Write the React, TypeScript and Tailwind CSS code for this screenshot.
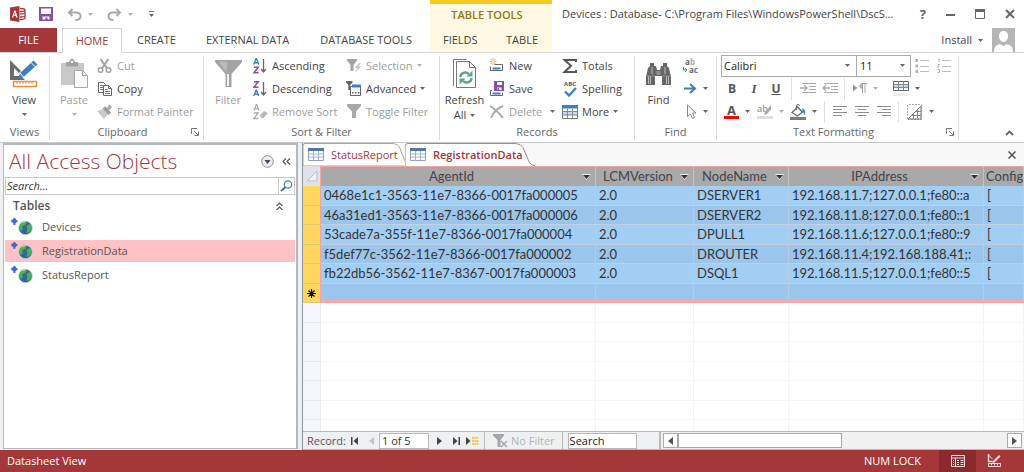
import type { ReactNode } from 'react';

const GREY = '#666';
const DIM = '#b0b0b0';

function Svg({ w, h, children, className = '' }: { w: number; h: number; children: ReactNode; className?: string }) {
  return (
    <svg width={w} height={h} viewBox={`0 0 ${w} ${h}`} fill="none" aria-hidden="true" className={'shrink-0 ' + className}>
      {children}
    </svg>
  );
}

function Caret({ dim = false, className = '' }: { dim?: boolean; className?: string }) {
  return (
    <Svg w={5} h={3} className={className}>
      <path d="M0 0h5L2.5 3z" fill={dim ? DIM : GREY} />
    </Svg>
  );
}

/* ---------- Title bar icons ---------- */

function AccessLogo() {
  return (
    <Svg w={16} h={16}>
      <path d="M0 1.5 9.5 0v16L0 14.5z" fill="#a4373a" />
      <path d="m2 11.5 2.3-7h1.2l2.2 7H6.3l-.5-1.7H3.7l-.5 1.7zM4 8.6h1.500L4.800 6z" fill="#fff" />
      <path d="M10 2.500c3 0 5 .3 5 1.500s-2 1.500-5 1.500M15 4v8c0 1-2 1.500-5 1.500M15 6.500c0 1-2 1.500-5 1.500M15 9.500c0 1-2 1.500-5 1.500" stroke="#a4373a" strokeWidth="1.300" />
    </Svg>
  );
}

function SaveIcon({ size = 14 }: { size?: number }) {
  return (
    <svg width={size} height={size} viewBox="0 0 14 14" aria-hidden="true" className="shrink-0">
      <path d="M0 0h14v14H0z" fill="#8650a8" />
      <path d="M2 1.500h10v5.500H2zM3.500 9.500h7v3h-2v-2h-2v2h-3z" fill="#fff" />
    </svg>
  );
}

function UndoIcon({ flip = false }: { flip?: boolean }) {
  return (
    <Svg w={15} h={13} className={flip ? '-scale-x-100' : ''}>
      <path d="M5.500 1 2 4.500 5.500 8M2 4.500h7c3.200 0 4.500 1.800 4.500 3.700S12 12 8.500 12" stroke="#a9a9a9" strokeWidth="2" />
    </Svg>
  );
}

/* ---------- Ribbon icons ---------- */

function ViewIcon() {
  return (
    <Svg w={30} h={30}>
      <path d="M1 1v20h15l-4-4H5v-8l5 5 2-2z" fill="#6b6b6b" />
      <path d="m9 20 2-6L24.500 1.500l4 4L14.500 18z" fill="#3e7fc1" />
      <path d="m22 3.500 4.500 4.500M11 14l3.500 4" stroke="#fff" />
      <path d="M4.500 22.500h23v5h-23z" fill="#fff" stroke="#e8923a" strokeWidth="1.500" />
      <path d="M8 23v2m3-2v2m3-2v2m3-2v2m3-2v2m3-2v2" stroke="#e8923a" />
    </Svg>
  );
}

function PasteIcon() {
  return (
    <Svg w={28} h={30}>
      <path d="M1 4h23v22H1z" fill="#c8c8c8" />
      <path d="M6 3h3.500V1.500Q9.500 0 12 0t2.500 1.500V3H18v4.500H6z" fill="#a2a2a2" />
      <path d="M11 2h2v2h-2z" fill="#fff" />
      <path d="M14.500 11.500h8l5 5v12h-13z" fill="#fafafa" stroke="#a8a8a8" />
      <path d="M22.500 11.500v5h5" stroke="#a8a8a8" />
    </Svg>
  );
}

function CutIcon() {
  return (
    <Svg w={16} h={16}>
      <path d="m3.500 1 7 10M11.500 1l-7 10" stroke="#a2a2a2" strokeWidth="2" />
      <circle cx="3.500" cy="12" r="2.300" stroke="#a2a2a2" strokeWidth="1.500" />
      <circle cx="11.500" cy="12" r="2.300" stroke="#a2a2a2" strokeWidth="1.500" />
    </Svg>
  );
}

function CopyIcon() {
  return (
    <Svg w={16} h={16}>
      <path d="M1.500 1.500h5l2 2v8h-7z" fill="#fff" stroke="#666" />
      <path d="M3 4.500h3m-3 2h3m-3 2h3" stroke="#3e7fc1" />
      <path d="M6.500 4.500h5l3 3v7h-8z" fill="#fff" stroke="#666" />
      <path d="M11.500 4.500v3h3" stroke="#666" />
      <path d="M8 8.500h2.500M8 10.500h5M8 12.500h5" stroke="#3e7fc1" />
    </Svg>
  );
}

function PainterIcon() {
  return (
    <Svg w={16} h={16}>
      <path d="m0 7 6-2 5 5-4 5z" fill="#c9c9c9" />
      <path d="m5.500 4.500 3-2 5.500 6-2.500 2.500z" fill="#9b9b9b" />
      <path d="m10 4 2.500-3.500L15 3l-3 3.500z" fill="#a8a8a8" />
    </Svg>
  );
}

function FunnelBig() {
  return (
    <Svg w={27} h={28}>
      <path d="M0 0h27v2L16.500 14v13h-6V14L0 2z" fill="#a3a3a3" />
      <path d="M3.500 1.500h9L11.500 13z" fill="#b8b8b8" />
      <path d="M12 14v12h2V14" fill="#f2f2f2" />
    </Svg>
  );
}

function SortIcon({ desc = false }: { desc?: boolean }) {
  const a = 'M.8 6.500 3 .6h.500l2.200 5.900M1.600 4.700h3.300';
  const z = 'M1 .8h4.300L1 6.200h4.500';
  return (
    <Svg w={14} h={16}>
      <path d={desc ? z : a} stroke={desc ? '#8650a8' : '#3e7fc1'} strokeWidth="1.400" />
      <g transform="translate(0 8.500)">
        <path d={desc ? a : z} stroke={desc ? '#3e7fc1' : '#8650a8'} strokeWidth="1.400" />
      </g>
      <path d="M10.500 1v13M8 11l2.500 3 2.500-3" stroke="#666" strokeWidth="1.300" />
    </Svg>
  );
}

function RemoveSortIcon() {
  return (
    <Svg w={15} h={16}>
      <path d="M1 6.500 3.300.6h.500L6 6.500M1.800 4.700h3.500M.8 9h4.300L.8 14.500h4.500" stroke="#a9a9a9" strokeWidth="1.300" />
      <path d="m7 11 4-4 4 2-4.500 5H8z" fill="#b9b9b9" />
    </Svg>
  );
}

function SelectionIcon() {
  return (
    <Svg w={15} h={16}>
      <path d="M0 1h10v1.500L6.500 7v6h-3V7L0 2.500z" fill="#a3a3a3" />
      <path d="m12 5-4 5h2.500L8 15l6-6.500h-2.500L14 5z" fill="#c4c4c4" />
    </Svg>
  );
}

function AdvancedIcon() {
  return (
    <Svg w={16} h={16}>
      <path d="M4.500 5.500h10v9h-10z" fill="#fff" stroke="#666" />
      <path d="M6 3.500h9v3H6z" fill="#3e7fc1" />
      <path d="M0 0h6.500v1.500L4.300 4v5h-2V4L0 1.500z" fill="#666" />
      <path d="M6 11h1.500v1.500H6zm3 0h1.500v1.500H9zm3 0h1.500v1.500H12z" fill="#666" />
    </Svg>
  );
}

function FunnelSmall() {
  return (
    <Svg w={15} h={15}>
      <path d="M0 0h14v2L9 7.500V14H5V7.500L0 2z" fill="#a9a9a9" />
    </Svg>
  );
}

function RefreshIcon() {
  return (
    <Svg w={24} h={30}>
      <path d="M.5 27V.5h13" stroke="#777" />
      <path d="M3.500 28V3" stroke="#777" />
      <path d="M3.500 2.500h13l6 6v20h-19z" fill="#fff" stroke="#777" />
      <path d="M16.500 2.500v6h6" stroke="#777" />
      <path d="M7.500 18c0-4 5-6 8.500-3M18.500 19c0 4-5 6-8.500 3" stroke="#5aa584" strokeWidth="2.400" />
      <path d="M19.500 11.500v6H13.500zM6.500 25.500v-6h6z" fill="#5aa584" />
    </Svg>
  );
}

function NewIcon() {
  return (
    <Svg w={16} h={16}>
      <path d="M5.500 6.500h8v6h-12v-4" stroke="#666" />
      <path d="M3.500 9.500h8v2h-8z" fill="#3e7fc1" />
      <path d="M4 0v7M.5 3.500h7M1.500 1l5 5m0-5-5 5" stroke="#edb35f" />
      <circle cx="4" cy="3.500" r="1" fill="#fff" />
    </Svg>
  );
}

function SaveRecordIcon() {
  return (
    <Svg w={16} h={16}>
      <path d="M3 9.500H1.500v5h12v-3" stroke="#666" />
      <path d="M3.500 11.500h8v2h-8z" fill="#3e7fc1" />
      <path d="M5 0h10v10H5z" fill="#8650a8" />
      <path d="M8 1h5v3H8zM8 6.500h4.500V9H8z" fill="#fff" />
      <path d="M8.500 7h1.500v2H8.500z" fill="#8650a8" />
    </Svg>
  );
}

function DeleteIcon() {
  return (
    <Svg w={16} h={14}>
      <path d="M1 1c5 3 9 7 13 12M14 1C9 3 4 8 2 13" stroke="#a9a9a9" strokeWidth="2" />
    </Svg>
  );
}

function SumIcon() {
  return (
    <Svg w={16} h={16}>
      <path d="M14 4V2H2.500L9 7.800 2.500 14H14v-2" stroke="#555" strokeWidth="2" />
    </Svg>
  );
}

function SpellingIcon() {
  return (
    <span className="flex w-4 shrink-0 flex-col items-center">
      <span className="text-[6px] leading-[6px] font-bold text-[#555]">ABC</span>
      <Svg w={13} h={10}>
        <path d="m1 4.500 4 4L12 1" stroke="#3e7fc1" strokeWidth="2.300" />
      </Svg>
    </span>
  );
}

function MoreIcon() {
  return (
    <Svg w={16} h={15}>
      <path d="M.5 1.500h15v13H.5z" fill="#fff" stroke="#777" />
      <path d="M0 1h16v3.500H0z" fill="#3e7fc1" />
      <path d="M1 8h14v3H1z" fill="#c5dcf0" />
      <path d="M5.500 4.500v10m5-10v10M1 7.500h14M1 11h14" stroke="#888" />
    </Svg>
  );
}

function Binoculars() {
  return (
    <Svg w={27} h={24}>
      <path d="M5 1h4v3h2l1 4h3l1-4h2V1h4v3l2 2 2 9v8h-9v-9h-7v9H1v-8l2-9 2-2z" fill="#666" />
      <path d="M11.500 9h4v4h-4z" fill="#8d8d8d" />
      <path d="M3.500 14v8M5.500 14v8M21.500 14v8M23.500 14v8M7 5v7M20 5v7" stroke="#bdbdbd" />
      <path d="M1 14h9M17 14h9" stroke="#8a8a8a" />
    </Svg>
  );
}

function ReplaceIcon() {
  return (
    <span className="flex w-4 shrink-0 flex-col text-[8px] leading-[8px] font-bold text-[#666]">
      <span>a<span className="text-[#aaa]">b</span></span>
      <span className="flex items-center gap-px pl-px">
        <Svg w={5} h={5}><path d="M.5 0v3h3M2 1l2 2-2 2" stroke="#3e7fc1" /></Svg>
        <span>a<span className="text-[#3e7fc1]">c</span></span>
      </span>
    </span>
  );
}

function GoToIcon() {
  return (
    <Svg w={13} h={11}>
      <path d="M0 5.500h10M6 1l5 4.500L6 10" stroke="#3e7fc1" strokeWidth="2" />
    </Svg>
  );
}

function CursorIcon() {
  return (
    <Svg w={12} h={16}>
      <path d="M2.500 1v11.500l3-2.500 2 4.500 2-1-2-4.500h3.500z" stroke="#888" fill="#fff" />
    </Svg>
  );
}

function BulletsIcon({ numbered = false }: { numbered?: boolean }) {
  return (
    <Svg w={14} h={16}>
      {numbered
        ? <path d="M1 1h1v3M.5 6.500h2L.5 9h2M.5 11.500h2v3h-2" stroke="#b0b0b0" />
        : <path d="M.5 1h2.500v3H.5zm0 5.500h2.500v3H.5zm0 5.500h2.500v3H.5z" fill="#b0b0b0" />}
      <path d="M5 2.500h9M5 8.500h9m-9 5h9" stroke="#bdbdbd" />
    </Svg>
  );
}

function IndentIcon({ out = false }: { out?: boolean }) {
  return (
    <Svg w={16} h={11}>
      <path d="M2 .5h14M9 3.500h7M9 6.500h7M2 9.500h14" stroke="#aaa" />
      <path d={out ? 'M8 5H1m3-3L1 5l3 3' : 'M0 5h7M4 2l3 3-3 3'} stroke="#aaa" strokeWidth="1.300" />
    </Svg>
  );
}

function DirectionIcon() {
  return (
    <Svg w={14} h={11}>
      <path d="M0 1.500 4.500 5 0 8.500z" fill="#999" />
      <path d="M9 .5h5M9.500 5.500C6 5.500 6 .5 9.500.5zM9.500.5V10m2.500-9.500V10" stroke="#a5a5a5" fill="#b5b5b5" />
    </Svg>
  );
}

function GridlinesIcon() {
  return (
    <Svg w={16} h={16}>
      <path d="M.5.5h15v9H.5z" fill="#fff" stroke="#666" />
      <path d="M1 3.500h14v3H1z" fill="#c5dcf0" />
      <path d="M5.500 1v8m5-8v8M1 3.500h14M1 6.500h14" stroke="#888" />
      <path d="M0 12h16v3H0z" fill="#ececec" />
    </Svg>
  );
}

function HighlightIcon() {
  return (
    <span className="flex w-4 shrink-0 flex-col">
      <span className="flex h-3 text-[9px] leading-[10px] font-semibold text-[#999]">
        ab
        <Svg w={7} h={11} className="-ml-1"><path d="m7 1-6 7-1 3 3-1 5-6z" fill="#aaa" /></Svg>
      </span>
      <span className="h-[3px] bg-[#e2dde2]" />
    </span>
  );
}

function FillIcon() {
  return (
    <Svg w={16} h={16}>
      <path d="M2 8.500 7.500 3l5 5-5 4z" stroke="#666" strokeWidth="1.300" fill="#fff" />
      <path d="M6.500 6V2q0-1.500 1.500-1.500T9.500 2" stroke="#666" />
      <path d="M12 4.500c3 0 4 3 2.500 6.500L13 8z" fill="#3e7fc1" />
      <path d="M0 13h16v3H0z" fill="#7a7a7a" />
    </Svg>
  );
}

function AlignIcon({ kind }: { kind: 'left' | 'center' | 'right' }) {
  const short = { left: 'M0 3.500h9M0 9.500h9', center: 'M2.500 3.500h9M2.500 9.500h9', right: 'M5 3.500h9M5 9.500h9' }[kind];
  return (
    <Svg w={14} h={11}>
      <path d="M0 .5h14M0 6.500h14" stroke="#8f8f8f" />
      <path d={short} stroke="#8f8f8f" />
    </Svg>
  );
}

function AlternateIcon() {
  return (
    <Svg w={16} h={16}>
      <path d="M.5 1v14.500h14V.5H1" stroke="#aaa" strokeDasharray="2 1" />
      <path d="m1 15 13-13v13z" fill="#fff" stroke="#777" />
      <path d="M10.500 5v10M6.500 9v6M5 11.500h9M9 7.500h5" stroke="#888" />
    </Svg>
  );
}

/* ---------- Shared ribbon parts ---------- */

function Group({ label, width, launcher = false, children }: { label: string; width: string; launcher?: boolean; children: ReactNode }) {
  return (
    <section aria-label={label} className={`mt-[3px] mb-[2px] flex shrink-0 flex-col border-r border-[#dedede] ${width}`}>
      <div className="flex flex-1 items-start">{children}</div>
      <div className="flex h-4 items-center">
        <span className={`flex-1 text-center text-[#666] ${launcher ? 'pl-1' : ''}`}>{label}</span>
        {launcher && (
          <button aria-label={`${label} options`} className="mr-1">
            <Svg w={8} h={8}>
              <path d="M.5 6V.5H6M3 3l4 4M7.500 3.500v4h-4" stroke="#777" />
            </Svg>
          </button>
        )}
      </div>
    </section>
  );
}

function Big({ icon, label, width, dim = false, children }: { icon: ReactNode; label: string; width: string; dim?: boolean; children?: ReactNode }) {
  return (
    <button className={`flex shrink-0 flex-col items-center ${width} ${dim ? 'text-[#9d9d9d]' : 'text-[#444]'}`}>
      <span className="flex h-9 items-center">{icon}</span>
      <span className="leading-4">{label}</span>
      {children}
    </button>
  );
}

function Item({ icon, label, dim = false, caret = false, gap = 'gap-1' }: { icon: ReactNode; label: string; dim?: boolean; caret?: boolean; gap?: string }) {
  return (
    <button className={`flex h-[23px] items-center gap-1 ${dim ? 'text-[#9d9d9d]' : 'text-[#444]'}`}>
      <span className="flex w-4 shrink-0 justify-center">{icon}</span>
      <span className={`flex items-center ${gap}`}>
        {label}
        {caret && <Caret dim={dim && gap === 'gap-1'} />}
      </span>
    </button>
  );
}

function Tool({ label, width, children }: { label: string; width: string; children: ReactNode }) {
  return <button aria-label={label} className={`flex h-[22px] shrink-0 items-center gap-[6px] ${width}`}>{children}</button>;
}

function Rule() {
  return <span className="mr-2 h-[22px] w-px shrink-0 bg-[#e0e0e0]" />;
}

/* ---------- Sections ---------- */

function Header() {
  const tab = 'h-6 text-[#444]';
  return (
    <header className="flex h-[52px] shrink-0">
      <div className="flex w-[430px] shrink-0 flex-col">
        <div className="flex h-7 items-center pl-[10px]">
          <AccessLogo />
          <button aria-label="Save" className="ml-[13px]"><SaveIcon /></button>
          <button aria-label="Undo" className="ml-[14px] flex items-center gap-[6px]"><UndoIcon /><Caret dim /></button>
          <button aria-label="Redo" className="ml-[14px] flex items-center gap-[6px]"><UndoIcon flip /><Caret dim /></button>
          <button aria-label="Customize toolbar" className="ml-4 flex flex-col items-center gap-[2px]">
            <span className="h-px w-[5px] bg-[#777]" />
            <Caret />
          </button>
        </div>
        <nav className="flex h-6 items-stretch">
          <button className="w-[57px] bg-[#a4373a] text-white">FILE</button>
          <button className="z-10 -mb-px ml-[5px] w-[60px] border border-b-0 border-[#d5d5d5] bg-white text-[#a4373a]">HOME</button>
          <button className={`${tab} ml-[15px]`}>CREATE</button>
          <button className={`${tab} ml-[30px]`}>EXTERNAL DATA</button>
          <button className={`${tab} ml-[31px]`}>DATABASE TOOLS</button>
        </nav>
      </div>
      <div className="flex w-[122px] shrink-0 flex-col border-t-4 border-[#f3ca1d] bg-[#fff9e3]">
        <span className="h-6 pr-2 text-center font-semibold leading-[22px] text-[#957714]">TABLE TOOLS</span>
        <nav className="flex h-6 justify-between pr-[14px] pl-[13px]">
          <button className="text-[#444]">FIELDS</button>
          <button className="text-[#444]">TABLE</button>
        </nav>
      </div>
      <div className="flex min-w-0 flex-1 flex-col">
        <div className="flex h-7 items-center justify-between pr-[9px] pl-[10px]">
          <h1 className="truncate text-[#444]">Devices : Database- C:\Program Files\WindowsPowerShell\DscS...</h1>
          <div className="flex items-center gap-5">
            <button aria-label="Help" className="text-[13px] font-bold text-[#666]">?</button>
            <button aria-label="Minimize"><Svg w={9} h={10}><path d="M0 6h9" stroke="#666" strokeWidth="2" /></Svg></button>
            <button aria-label="Restore"><Svg w={10} h={10}><path d="M.5.5h9v9h-9z" stroke="#666" /><path d="M0 0h10v3H0z" fill="#666" /></Svg></button>
            <button aria-label="Close"><Svg w={10} h={10}><path d="m1 1 8 8m0-8L1 9" stroke="#666" strokeWidth="2" /></Svg></button>
          </div>
        </div>
        <div className="flex h-6 items-center justify-end pr-[9px]">
          <button className="flex items-center gap-[6px] text-[#444]">Install <Caret /></button>
          <Svg w={23} h={24} className="ml-[9px]">
            <path d="M0 0h23v24H0z" fill="#b5b5b5" />
            <path d="M11.500 3c3 0 4.500 2 4.500 5s-2 6-4.500 6S7 11 7 8s1.500-5 4.500-5M2 24c0-6 3-7 6-8l3.500 2 3.500-2c3 1 6 2 6 8z" fill="#fff" />
          </Svg>
        </div>
      </div>
    </header>
  );
}

function Ribbon() {
  return (
    <div className="flex h-[91px] shrink-0 border-t border-b border-t-[#d5d5d5] border-b-[#c6c8ca] bg-white">
      <Group label="Views" width="w-[50px]">
        <Big icon={<ViewIcon />} label="View" width="w-12">
          <Caret className="mt-[5px]" />
        </Big>
      </Group>
      <Group label="Clipboard" width="w-[154px]" launcher>
        <Big icon={<PasteIcon />} label="Paste" width="w-[48px]" dim>
          <Caret dim className="mt-[5px]" />
        </Big>
        <div className="-mt-[2px] -ml-px">
          <Item icon={<CutIcon />} label="Cut" dim />
          <Item icon={<CopyIcon />} label="Copy" />
          <Item icon={<PainterIcon />} label="Format Painter" dim />
        </div>
      </Group>
      <Group label="Sort & Filter" width="w-[236px]">
        <Big icon={<FunnelBig />} label="Filter" width="w-[48px]" dim />
        <div className="-mt-[2px] w-[94px] shrink-0">
          <Item icon={<SortIcon />} label="Ascending" />
          <Item icon={<SortIcon desc />} label="Descending" />
          <Item icon={<RemoveSortIcon />} label="Remove Sort" dim />
        </div>
        <div className="-mt-[2px]">
          <Item icon={<SelectionIcon />} label="Selection" dim caret />
          <Item icon={<AdvancedIcon />} label="Advanced" caret />
          <Item icon={<FunnelSmall />} label="Toggle Filter" dim />
        </div>
      </Group>
      <Group label="Records" width="w-[195px]">
        <Big icon={<RefreshIcon />} label="Refresh" width="w-[49px]">
          <span className="flex items-center gap-1 leading-[14px]">All <Caret /></span>
        </Big>
        <div className="-mt-[2px] w-[73px] shrink-0">
          <Item icon={<NewIcon />} label="New" />
          <Item icon={<SaveRecordIcon />} label="Save" />
          <Item icon={<DeleteIcon />} label="Delete" dim caret gap="gap-2" />
        </div>
        <div className="-mt-[2px]">
          <Item icon={<SumIcon />} label="Totals" />
          <Item icon={<SpellingIcon />} label="Spelling" />
          <Item icon={<MoreIcon />} label="More" caret />
        </div>
      </Group>
      <Group label="Find" width="w-[82px]">
        <Big icon={<Binoculars />} label="Find" width="w-[47px]" />
        <div className="-mt-[2px]">
          <button aria-label="Replace" className="flex h-[23px] items-center"><ReplaceIcon /></button>
          <button aria-label="Go to" className="flex h-[23px] items-center gap-[6px] pl-[2px]"><GoToIcon /><Caret /></button>
          <button aria-label="Select" className="flex h-[23px] items-center gap-[6px] pl-[3px]"><CursorIcon /><Caret /></button>
        </div>
      </Group>
      <Group label="Text Formatting" width="w-[242px]" launcher>
        <div className="-mt-[2px] pl-1">
          <div className="flex h-[23px] items-center">
            <label className="relative flex h-[22px] w-[136px] items-center border border-[#ababab]">
              <select aria-label="Font" className="h-full w-full appearance-none px-[2px] text-[#222]"><option>Calibri</option></select>
              <Caret className="absolute right-[6px]" />
            </label>
            <label className="relative -ml-px flex h-[22px] w-[55px] items-center border border-[#ababab]">
              <select aria-label="Font size" className="h-full w-full appearance-none px-[3px] text-[#222]"><option>11</option></select>
              <Caret className="absolute right-[5px]" />
            </label>
            <button aria-label="Bullets" className="ml-1"><BulletsIcon /></button>
            <button aria-label="Numbering" className="ml-2"><BulletsIcon numbered /></button>
          </div>
          <div className="flex h-[23px] items-center">
            <button className="w-[22px] text-[12px] font-bold text-[#555]">B</button>
            <button className="w-[22px] font-['Liberation_Serif'] text-[13px] font-bold text-[#555] italic">I</button>
            <button className="mr-1 w-[22px] text-[12px] font-bold text-[#555] underline">U</button>
            <Rule />
            <Tool label="Increase indent" width="w-[22px]"><IndentIcon /></Tool>
            <Tool label="Decrease indent" width="w-[22px]"><IndentIcon out /></Tool>
            <Rule />
            <Tool label="Text direction" width="w-10"><DirectionIcon /><Caret dim /></Tool>
            <Tool label="Gridlines" width="w-[30px]"><GridlinesIcon /><Caret /></Tool>
          </div>
          <div className="flex h-[23px] items-center pl-[3px]">
            <Tool label="Font color" width="w-[33px]">
              <span className="flex w-[15px] flex-col">
                <span className="h-3 text-center text-[13px] leading-3 font-bold text-[#555]">A</span>
                <span className="h-[3px] bg-[#f00]" />
              </span>
              <Caret />
            </Tool>
            <Tool label="Highlight color" width="w-[33px]"><HighlightIcon /><Caret dim /></Tool>
            <Tool label="Background color" width="w-[34px]"><FillIcon /><Caret /></Tool>
            <Rule />
            <Tool label="Align left" width="w-[22px]"><AlignIcon kind="left" /></Tool>
            <Tool label="Center" width="w-[22px]"><AlignIcon kind="center" /></Tool>
            <Tool label="Align right" width="w-[21px]"><AlignIcon kind="right" /></Tool>
            <Rule />
            <Tool label="Alternate row color" width="w-[30px]"><AlternateIcon /><Caret /></Tool>
          </div>
        </div>
      </Group>
      <div className="flex flex-1 items-end justify-end pr-[10px] pb-[6px]">
        <button aria-label="Collapse the ribbon">
          <Svg w={9} h={6}><path d="m1 5 3.500-3.500L8 5" stroke="#666" strokeWidth="1.800" /></Svg>
        </button>
      </div>
    </div>
  );
}

function GlobeIcon() {
  return (
    <Svg w={24} h={22}>
      <path d="M4.500 2h2v2.200L8.500 4v2.200h-2V9h-2V6.500L2.500 6V4.200h2z" fill="#5b80d6" />
      <path d="M4.500 1.500 8.500 5l-4 4V6.500h-2v-3h2z" fill="#3f69cc" />
      <circle cx="16.500" cy="12" r="6.800" fill="#33669c" stroke="#bcd0dc" />
      <path d="M11.500 8c2-2.500 5-3 6-2l-1 3-3 1v3l-1 2c-2-1-2.500-4-1-7M17.500 10l3-2c2 1 2.500 3 1.500 6l-3 3-1.500-1 1-3z" fill="#4fb04c" />
      <path d="M13.500 7c1-1 2-1.500 3-1" stroke="#cfe9f7" />
    </Svg>
  );
}

function NavPane() {
  return (
    <aside className="mr-[4px] mb-px ml-[3px] flex w-[295px] shrink-0 flex-col border border-t-2 border-r-2 border-[#b3b8bd] bg-white px-px">
      <div className="flex h-8 items-center pl-1">
        <h2 className="flex-1 text-[21px] font-light text-[#a4373a]">All Access Objects</h2>
        <button aria-label="Filter objects">
          <Svg w={13} h={13}>
            <circle cx="6.500" cy="6.500" r="5.800" fill="#ececf0" stroke="#8d8f96" />
            <path d="M3.500 5h6l-3 4z" fill="#444a58" />
          </Svg>
        </button>
        <button aria-label="Close pane" className="mr-1 ml-2">
          <Svg w={9} h={7}><path d="M4 .5 1 3.500l3 3m4-6-3 3 3 3" stroke="#555" strokeWidth="1.300" /></Svg>
        </button>
      </div>
      <form className="flex h-[18px] border border-[#c8c8c8]">
        <input type="search" aria-label="Search" placeholder="Search..." className="min-w-0 flex-1 px-px italic placeholder:text-[#333] placeholder:opacity-100" />
        <button type="button" aria-label="Search objects" className="flex w-4 items-center justify-center border-l border-[#c8c8c8]">
          <Svg w={13} h={12}>
            <circle cx="8" cy="4.500" r="3.700" stroke="#4a86c4" strokeWidth="1.300" />
            <path d="M5.500 7 1 11" stroke="#4a72b4" strokeWidth="2" />
          </Svg>
        </button>
      </form>
      <div className="flex h-[21px] items-center justify-between pr-3 pl-2">
        <h3 className="text-[12px] font-semibold text-[#555]">Tables</h3>
        <button aria-label="Collapse tables">
          <Svg w={7} h={8}><path d="m.5 4 3-3 3 3m-6 4 3-3 3 3" stroke="#555" strokeWidth="1.200" /></Svg>
        </button>
      </div>
      <ul className="flex flex-col gap-[2px]">
        {['Devices', 'RegistrationData', 'StatusReport'].map((name, i) => (
          <li key={name}>
            <button className={`flex h-[22px] w-full items-center gap-[9px] pl-1 text-[#555] ${i === 1 ? 'bg-[#ffc1c4]' : ''}`}>
              <GlobeIcon />
              {name}
            </button>
          </li>
        ))}
      </ul>
    </aside>
  );
}

function TableTabIcon() {
  return (
    <Svg w={16} h={13}>
      <path d="M.5.5h15v12H.5z" fill="#fff" stroke="#8ea2bd" />
      <path d="M0 0h16v3H0z" fill="#5577a8" />
      <path d="M5.500 3v10m5-10v10M1 6h14M1 9h14" stroke="#9fb3ce" />
    </Svg>
  );
}

const columns = [
  { title: 'AgentId', width: 'w-[275px]' },
  { title: 'LCMVersion', width: 'w-[98px]' },
  { title: 'NodeName', width: 'w-[95px]' },
  { title: 'IPAddress', width: 'w-[195px]' },
  { title: 'Config', width: '' },
];

const records = [
  ['0468e1c1-3563-11e7-8366-0017fa000005', '2.0', 'DSERVER1', '192.168.11.7;127.0.0.1;fe80::a', '['],
  ['46a31ed1-3563-11e7-8366-0017fa000006', '2.0', 'DSERVER2', '192.168.11.8;127.0.0.1;fe80::1', '['],
  ['53cade7a-355f-11e7-8366-0017fa000004', '2.0', 'DPULL1', '192.168.11.6;127.0.0.1;fe80::9', '['],
  ['f5def77c-3562-11e7-8366-0017fa000002', '2.0', 'DROUTER', '192.168.11.4;192.168.188.41;:', '['],
  ['fb22db56-3562-11e7-8367-0017fa000003', '2.0', 'DSQL1', '192.168.11.5;127.0.0.1;fe80::5', '['],
  ['', '', '', '', ''],
];

function Datasheet() {
  return (
    <div className="min-h-0 flex-1 overflow-hidden bg-white">
      <table className="w-full table-fixed border-separate border-spacing-0 font-[Lato,sans-serif] text-[13px] leading-[17px] text-[#333]">
        <thead>
          <tr className="h-5">
            <th className="w-[18px] border-r border-r-[#f4a3a5] bg-[#dfe3e9] p-0" aria-label="Select all">
              <Svg w={12} h={12} className="mx-auto"><path d="M11 1v10H1z" fill="#eef1f6" stroke="#b9c0cc" /></Svg>
            </th>
            {columns.map((c, i) => (
              <th key={c.title} className={`border-t border-r border-t-[#f4a3a5] border-r-[#c4c4c4] bg-[#a9a9a9] p-0 font-normal text-[#444] ${c.width}`}>
                <div className={`flex items-center overflow-hidden ${i === 4 ? 'pl-[2px]' : 'pr-1'}`}>
                  <span className={`flex-1 ${i === 4 ? 'text-left' : 'text-center'}`}>{c.title}</span>
                  {i < 4 && (
                    <button aria-label={`Filter ${c.title}`} className="shrink-0">
                      <Svg w={9} h={6}><path d="M0 0h9L4.500 6z" fill="#eee" /><path d="M1 1h7L4.500 5z" fill="#333" /></Svg>
                    </button>
                  )}
                </div>
              </th>
            ))}
          </tr>
        </thead>
        <tbody>
          {records.map((cells, r) => {
            const last = r === records.length - 1;
            return (
              <tr key={r} className="odd:h-5 even:h-[19px]">
                <td className="border-r border-b border-r-[#f4a3a5] border-b-[#dcc87a] bg-[#ffd75e] p-0 text-center text-black">
                  {last && <Svg w={9} h={9} className="mx-auto"><path d="M4.500 0v9M0 4.500h9M1.500 1.500l6 6m0-6-6 6" stroke="#111" strokeWidth="1.200" /></Svg>}
                </td>
                {cells.map((text, i) => (
                  <td
                    key={i}
                    className={`overflow-hidden border-r border-r-[#b9cbe0] p-0 pl-[3px] whitespace-nowrap ${last ? 'border-b-3 border-b-[#fba5a8]' : 'border-b border-b-[#c3d0e2]'} ${r % 2 ? 'bg-[#9bc5ea]' : 'bg-[#a3cef3]'}`}
                  >
                    {text}
                  </td>
                ))}
              </tr>
            );
          })}
          {Array.from({ length: 7 }, (_, r) => (
            <tr key={`blank-${r}`} className="odd:h-5 even:h-[19px]">
              <td className="border-r border-b border-[#e9e9f0] bg-[#f6f6fe] p-0" />
              {columns.map((c) => <td key={c.title} className="border-r border-b border-r-[#f3f3f6] border-b-[#f4f4f6] p-0" />)}
            </tr>
          ))}
        </tbody>
      </table>
    </div>
  );
}

function RecordBar() {
  const sep = 'h-full w-px bg-[#b5b8bc]';
  return (
    <div className="flex h-[19px] shrink-0 items-center border-t border-b border-[#b5b8bc] bg-[#eff0f2] text-[#555]">
      <span className="w-12 pl-1">Record:</span>
      <button aria-label="First record"><Svg w={7} h={8}><path d="M0 0h1.500v8H0zM7 0v8L2.500 4z" fill="#444" /></Svg></button>
      <button aria-label="Previous record" className="ml-[11px]"><Svg w={5} h={8}><path d="M5 0v8L0 4z" fill="#c4c4c8" /></Svg></button>
      <input aria-label="Current record" defaultValue="1 of 5" className="ml-[5px] h-4 w-[50px] border border-[#b5b8bc] bg-white px-[2px] text-[#333]" />
      <button aria-label="Next record" className="ml-2"><Svg w={5} h={8}><path d="M0 0v8l5-4z" fill="#444" /></Svg></button>
      <button aria-label="Last record" className="ml-[11px]"><Svg w={7} h={8}><path d="M0 0v8l4.500-4zM5.500 0H7v8H5.500z" fill="#444" /></Svg></button>
      <button aria-label="New record" className="ml-[6px]">
        <Svg w={13} h={8}><path d="M0 0v8l4.500-4z" fill="#444" /><path d="M6 1h6.500M6 4h6.500M6 7h6.500" stroke="#f2ca45" strokeWidth="2" strokeDasharray="2 .4" /></Svg>
      </button>
      <span className={`${sep} ml-[5px]`} />
      <button disabled className="flex items-center gap-[3px] pr-[7px] pl-2 text-[#b3b4b8]">
        <Svg w={15} h={14}><path d="M0 0h11v1.500L7.500 6v7h-3V6L0 1.500z" fill="#a5a5aa" /><path d="m8 7 6 6m0-6-6 6" stroke="#a5a5aa" strokeWidth="1.500" /></Svg>
        No Filter
      </button>
      <span className={sep} />
      <input aria-label="Search records" defaultValue="Search" className="ml-[5px] h-4 w-[69px] border border-[#b5b8bc] bg-white px-px text-[#222]" />
      <div className="ml-[22px] flex h-full flex-1 items-center border-l-2 border-[#b5b8bc] bg-[#f1f1f2] px-[2px]">
        <button aria-label="Scroll left" className="flex h-[15px] w-[15px] items-center justify-center border border-[#ababab] bg-white"><Svg w={5} h={8}><path d="M5 0v8L0 4z" fill="#555" /></Svg></button>
        <div className="flex h-[15px] flex-1"><span className="w-1/2 border border-[#ababab] bg-white" /></div>
        <button aria-label="Scroll right" className="flex h-[15px] w-[15px] items-center justify-center border border-[#ababab] bg-white"><Svg w={5} h={8}><path d="M0 0v8l5-4z" fill="#555" /></Svg></button>
      </div>
    </div>
  );
}

function Workspace() {
  return (
    <main className="flex min-w-0 flex-1 flex-col border-l border-[#8f959b]">
      <div className="flex h-[23px] shrink-0 items-center bg-[#f8f8f8]">
        <button className="relative flex h-full w-[102px] shrink-0 items-center pl-[5px] text-[#a4373a]">
          <Svg w={104} h={23} className="absolute top-0 left-0">
            <path d="M0 23V2.500Q0 .5 2 .5h87q6 0 8 5L104 23z" fill="#fff" stroke="#a5a5a5" />
          </Svg>
          <span className="relative flex items-center gap-[7px]"><TableTabIcon />StatusReport</span>
        </button>
        <button className="relative flex h-full w-[130px] shrink-0 items-center pl-[5px] font-semibold text-[#a4373a]">
          <Svg w={130} h={23} className="absolute top-0 left-0">
            <path d="M0 23V3.500Q0 .5 3 .5h107q6 0 8 4l5 12q2 6 7 6" fill="#fff" stroke="#a08b7c" />
          </Svg>
          <span className="relative flex items-center gap-[7px]"><TableTabIcon />RegistrationData</span>
        </button>
        <button aria-label="Close table" className="mr-[8px] ml-auto">
          <Svg w={8} h={8}><path d="m.5.5 7 7m0-7-7 7" stroke="#555" strokeWidth="1.500" /></Svg>
        </button>
      </div>
      <Datasheet />
      <RecordBar />
    </main>
  );
}

function StatusBar() {
  return (
    <footer className="flex h-[22px] shrink-0 items-center bg-[#a4373a] pl-[7px] text-white">
      <span className="flex-1">Datasheet View</span>
      <span>NUM LOCK</span>
      <button aria-label="Datasheet view" className="ml-[18px] flex h-full w-[37px] items-center justify-center bg-[#8b2a2e]">
        <Svg w={14} h={12}><path d="M.5.5h13v11H.5zM.5 3h13M4.500 3v8.500M6 5.500h2m1.500 0h3M6 7.500h2m1.500 0h3M6 9.500h2m1.500 0h3M2 5.500h1m-1 2h1m-1 2h1" stroke="#f1dcdc" /></Svg>
      </button>
      <button aria-label="Design view" className="mr-[22px] ml-[11px]">
        <Svg w={15} h={14}><path d="M1.500 0v7.500h4" stroke="#f1dcdc" strokeWidth="1.500" /><path d="m1.500 1 4 4" stroke="#f1dcdc" /><path d="m5 8 7-7 1.500 1.500L7 9z" fill="#f1dcdc" /><path d="M1.500 9.500h12v3h-12z" stroke="#f1dcdc" /><path d="M4.500 10v1.500m3-1.500v1.500m3-1.500v1.500" stroke="#f1dcdc" /></Svg>
      </button>
    </footer>
  );
}

export default function App() {
  return (
    <div className="flex h-screen flex-col overflow-hidden bg-white font-['Open_Sans','Noto_Sans',sans-serif] text-[11px] leading-4 whitespace-nowrap">
      <Header />
      <Ribbon />
      <div className="flex min-h-0 flex-1 bg-[#eef0f2]">
        <NavPane />
        <Workspace />
      </div>
      <StatusBar />
    </div>
  );
}
